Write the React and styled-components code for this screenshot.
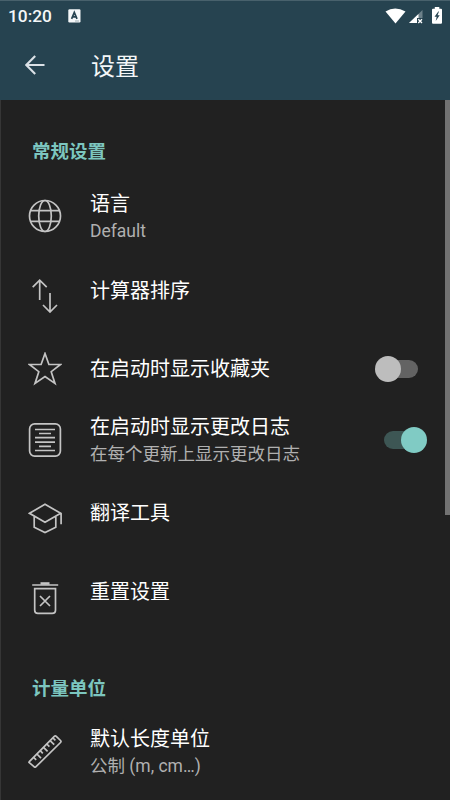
import React, { useState } from 'react';
import styled, { createGlobalStyle } from 'styled-components';

const GlobalStyle = createGlobalStyle`
  * {
    box-sizing: border-box;
  }
  body {
    margin: 0;
    background: #212121;
    font-family: Roboto, 'Noto Sans CJK SC', sans-serif;
    overflow: hidden;
  }
`;

const GlobeIcon = () => (
  <Icon viewBox="0 0 34 34">
    <circle cx="17" cy="17" r="15.5" />
    <ellipse cx="17" cy="17" rx="6.3" ry="15.5" />
    <path d="M2.5 11.7h29M2.5 22.3h29" />
  </Icon>
);

const SortIcon = () => (
  <Icon viewBox="0 0 34 34">
    <path d="M11.7 21V1.5M4.7 8.2l7-7 7 7M22 14v19M15 26l7 7 7-7" />
  </Icon>
);

const StarIcon = () => (
  <Icon viewBox="0 0 34 34">
    <path d="M17 1.500l3.900 11h11.600l-9.300 7.200 3.800 11.800L17 24.600 7 31.500l3.800-11.800-9.300-7.200h11.600z" />
  </Icon>
);

const LogIcon = () => (
  <Icon viewBox="0 0 34 34">
    <rect x="1.6" y="0.9" width="30.8" height="32.2" rx="5" />
    <path d="M7 6.5h20M11 10.5h12M7 14.6h20M7 19.2h20M11 23.4h12M7 27.5h20" />
  </Icon>
);

const CapIcon = () => (
  <Icon viewBox="0 0 34 34">
    <path d="M1.5 12.3L17 3.3l15.7 9L17 21.3zM6.2 15.2v11L17 31.500l10.800-5.300v-11M33.100 12.500v10.700" />
  </Icon>
);

const TrashIcon = () => (
  <Icon viewBox="0 0 34 34">
    <path d="M4.200 4h26M6.700 7.600h20.800v21.600q0 3.200-3.200 3.200H9.900q-3.200 0-3.200-3.200zM12 15l10 10M22 15l-10 10" />
    <path d="M12.500 2.500h9" strokeWidth="2.600" />
  </Icon>
);

const RulerIcon = () => (
  <Icon viewBox="0 0 34 34">
    <path d="M1.300 27.600L26.300 2.300q1-1 2 0l4.200 4.200q1 1 0 2L8 32.700q-1 1-2 0l-4.700-4q-.7-.6 0-1.100z" />
    <path d="M5.600 23.300l2.600 2.600M8.900 20l4.100 4.100M12.200 16.700l2.600 2.600M15.500 13.300l4.100 4.100M18.800 10l2.600 2.600M22.100 6.600l4.100 4.100M25 4l2.400 2.400" />
  </Icon>
);

const sections = [
  {
    title: '常规设置',
    rows: [
      { title: '语言', sub: 'Default', icon: GlobeIcon, height: 78, shift: 3 },
      { title: '计算器排序', icon: SortIcon, height: 82, shift: -10 },
      { title: '在启动时显示收藏夹', icon: StarIcon, height: 64, toggle: 'favorites' },
      {
        title: '在启动时显示更改日志',
        sub: '在每个更新上显示更改日志',
        icon: LogIcon,
        height: 78,
        toggle: 'changelog',
      },
      { title: '翻译工具', icon: CapIcon, height: 78, shift: -10 },
      { title: '重置设置', icon: TrashIcon, height: 82, shift: -12 },
    ],
  },
  {
    title: '计量单位',
    rows: [
      { title: '默认长度单位', sub: '公制 (m, cm…)', icon: RulerIcon, height: 78, shift: 2 },
    ],
  },
];

const App = () => {
  const [toggles, setToggles] = useState({ favorites: false, changelog: true });
  const handleToggle = (name) => {
    setToggles({ ...toggles, [name]: !toggles[name] });
  };

  return (
    <Screen>
      <GlobalStyle />
      <Header>
        <StatusBar>
          <Clock>10:20</Clock>
          <KeyboardBadge viewBox="0 0 13 14">
            <rect x="0.3" y="0.3" width="12.2" height="13.2" rx="1.2" fill="#f4f7f8" />
            <path d="M3.600 9.800L6.300 3.500 9 9.800M4.700 7.800h3.300" fill="none" stroke="#264350" strokeWidth="1.7" />
            <path d="M7 12h4" stroke="#9babb2" strokeWidth="1" />
          </KeyboardBadge>
          <StatusIcons viewBox="0 0 60 20">
            <path d="M0.500 5.500Q10 -0.500 20.500 5.500L10.500 17.500z" fill="#fff" />
            <path d="M37.500 4v13h-13.500z" fill="#6d818a" />
            <path d="M33.500 8v9h-9.500z" fill="#fff" />
            <path d="M32 12h6.500v6H32z" fill="#264350" />
            <path d="M33.300 13.300l3.700 3.700M37 13.300l-3.700 3.700" stroke="#fff" strokeWidth="1.3" />
            <path d="M49.800 1h4.500v1.700h1.700q1 0 1 1v13q0 1-1 1h-8q-1 0-1-1v-13q0-1 1-1h1.800z" fill="#fff" />
            <path d="M53.300 5.500l-3.800 5.200h2.200l-1 4.300 4-5.700h-2.200l1.500-3.800z" fill="#264350" />
          </StatusIcons>
        </StatusBar>
        <Toolbar>
          <BackIcon viewBox="0 0 20 20">
            <path d="M19.500 10H1.500M10.200 1L1.300 10l8.900 9" />
          </BackIcon>
          <PageTitle>设置</PageTitle>
        </Toolbar>
      </Header>
      <Body>
        <List>
          {sections.map((section) => (
            <Section key={section.title}>
              <SectionTitle>{section.title}</SectionTitle>
              {section.rows.map((row) => (
                <Row key={row.title} $height={row.height}>
                  <row.icon />
                  <Labels $shift={row.shift}>
                    <Label>{row.title}</Label>
                    {row.sub && <SubLabel>{row.sub}</SubLabel>}
                  </Labels>
                  {row.toggle && (
                    <Switch
                      role="switch"
                      aria-checked={toggles[row.toggle]}
                      $on={toggles[row.toggle]}
                      onClick={() => handleToggle(row.toggle)}
                    >
                      <Thumb $on={toggles[row.toggle]} />
                    </Switch>
                  )}
                </Row>
              ))}
            </Section>
          ))}
        </List>
        <Scrollbar />
      </Body>
    </Screen>
  );
};

export default App;

const Screen = styled.div`
  width: 450px;
  height: 800px;
  display: flex;
  flex-direction: column;
  background: #212121;
  overflow: hidden;
`;

const Header = styled.header`
  height: 100px;
  flex: none;
  background: #264350;
  border-top: 1px solid #48616c;
`;

const StatusBar = styled.div`
  height: 30px;
  display: flex;
  align-items: center;
  padding: 0 7px 0 8px;
`;

const Clock = styled.span`
  width: 60px;
  font-size: 17.3px;
  font-weight: 500;
  line-height: 30px;
  color: #f4f7f8;
`;

const KeyboardBadge = styled.svg`
  width: 13px;
  height: 14px;
  margin-top: -1px;
`;

const StatusIcons = styled.svg`
  width: 60px;
  height: 20px;
  margin: 0 -2px 0 auto;
`;

const Toolbar = styled.div`
  height: 69px;
  display: flex;
  align-items: center;
  gap: 46px;
  padding-left: 25px;
`;

const BackIcon = styled.svg`
  width: 20px;
  height: 20px;
  margin-top: -1px;
  fill: none;
  stroke: #dbe1e6;
  stroke-width: 2.1;
`;

const PageTitle = styled.h1`
  margin: 2px 0 0;
  font-size: 24px;
  font-weight: 400;
  line-height: 32px;
  color: #f4f7f8;
`;

const Body = styled.main`
  flex: 1;
  min-height: 0;
  display: flex;
  border-left: 1px solid #363636;
`;

const List = styled.div`
  flex: 1;
`;

const Scrollbar = styled.div`
  width: 5px;
  height: 415px;
  background: #727272;
`;

const Section = styled.section`
  padding-top: 39px;

  & + & {
    padding-top: 37px;
  }
`;

const SectionTitle = styled.h2`
  height: 38px;
  margin: 0;
  padding-left: 31px;
  font-size: 18.5px;
  font-weight: 700;
  line-height: 27px;
  color: #7cc6bf;

  ${Section} + ${Section} & {
    height: 36px;
  }
`;

const Row = styled.div`
  height: ${({ $height }) => $height}px;
  display: flex;
  align-items: center;
  padding: 0 19px 0 26.5px;
`;

const Icon = styled.svg`
  width: 34px;
  height: 34px;
  flex: none;
  fill: none;
  stroke: #c4c4c4;
  stroke-width: 1.7;
`;

const Labels = styled.div`
  flex: 1;
  margin-top: ${({ $shift }) => $shift || 0}px;
  margin-left: 28.5px;
  white-space: nowrap;
`;

const Label = styled.div`
  font-size: 20px;
  line-height: 28px;
  color: #fff;
`;

const SubLabel = styled.div`
  font-size: 17.5px;
  line-height: 27px;
  color: #b0b0b0;
`;

const Switch = styled.button`
  width: 42px;
  height: 18px;
  flex: none;
  display: flex;
  align-items: center;
  justify-content: ${({ $on }) => ($on ? 'flex-end' : 'flex-start')};
  margin-top: -1px;
  margin-right: ${({ $on }) => ($on ? 0 : 8)}px;
  padding: 0;
  border: none;
  border-radius: 9px;
  background: ${({ $on }) => ($on ? '#3d5654' : '#636363')};
  cursor: pointer;
`;

const Thumb = styled.span`
  width: 26px;
  height: 26px;
  flex: none;
  margin: ${({ $on }) => ($on ? '0 -1px 0 0' : '0 0 0 -1px')};
  border-radius: 50%;
  background: ${({ $on }) => ($on ? '#80cbc4' : '#bdbdbd')};
`;
